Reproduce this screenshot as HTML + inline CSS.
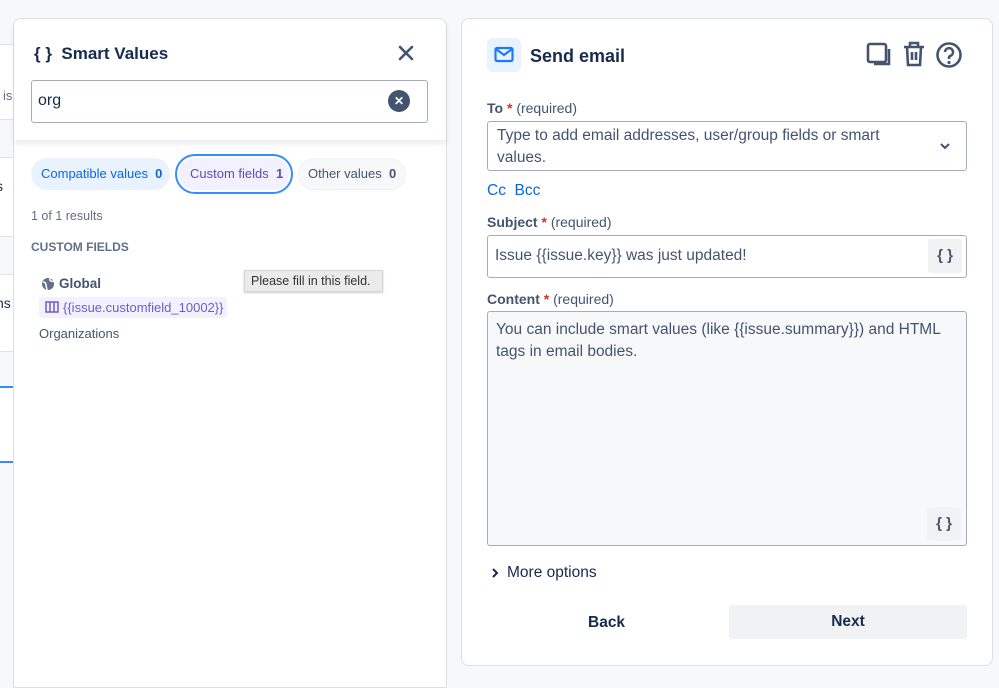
<!DOCTYPE html>
<html><head><meta charset="utf-8"><style>
*{box-sizing:border-box;margin:0;padding:0}
body{width:999px;height:675px;overflow:hidden;background:#f7f8f9;font-family:"Liberation Sans",sans-serif;color:#172b4d;position:relative}
.a{position:absolute}
.lbl{font-size:14px;font-weight:bold;color:#44546f}
.lbl span{font-weight:normal}
.lbl i{color:#c9372c;font-style:normal}
.box{border:1px solid #a5adba;border-radius:3px;background:#fff}
.sv{width:34px;height:34px;background:#f1f2f4;border-radius:3px;font-weight:bold;font-size:15px;text-align:center;line-height:34px;color:#44546f}
</style></head><body>
<div class="a" style="left:0;top:44px;width:13px;height:76px;background:#fff;border-top:1px solid #dfe1e6;border-bottom:1px solid #dfe1e6"></div>
<div class="a" style="left:0;top:157px;width:13px;height:80px;background:#fff;border-top:1px solid #dfe1e6;border-bottom:1px solid #dfe1e6"></div>
<div class="a" style="left:0;top:274px;width:13px;height:78px;background:#fff;border-top:1px solid #dfe1e6;border-bottom:1px solid #dfe1e6"></div>
<div class="a" style="left:0;top:386px;width:13px;height:77px;background:#fff;border-top:2px solid #388bff;border-bottom:2px solid #388bff"></div>
<div class="a" style="left:3px;top:88px;font-size:13px;color:#626f86">is</div>
<div class="a" style="left:-4px;top:178px;font-size:14px">s</div>
<div class="a" style="left:-4px;top:295px;font-size:14px">ns</div>
<div class="a" style="left:13px;top:18px;width:434px;height:670px;background:#fff;border:1px solid #dcdfe4;border-radius:8px 8px 0 0"></div>
<div class="a" style="left:14px;top:19px;width:432px;height:121px;background:#fff;border-radius:8px 8px 0 0;box-shadow:0 4px 6px rgba(9,30,66,.08)"></div>
<div class="a" style="left:34px;top:44px;font-size:17px;font-weight:bold;color:#172b4d">{ }&nbsp; Smart Values</div>
<svg class="a" style="left:398px;top:45px" width="16" height="16"><path d="M2 2L14 14M14 2L2 14" stroke="#44546f" stroke-width="2.6" stroke-linecap="round"/></svg>
<div class="a box" style="left:31px;top:80px;width:397px;height:43px"></div>
<div class="a" style="left:38px;top:92px;font-size:16px">org</div>
<div class="a" style="left:388px;top:90px;width:22px;height:22px;border-radius:50%;background:#44546f;color:#fff;font-size:12px;font-weight:bold;text-align:center;line-height:22px">✕</div>
<div class="a" style="left:31px;top:158px;width:139px;height:32px;border-radius:16px;background:#e9f2ff;color:#0c66e4;font-size:13px;line-height:32px;padding-left:10px">Compatible values&nbsp;&nbsp;<b>0</b></div>
<div class="a" style="left:175px;top:154px;width:118px;height:40px;border-radius:20px;border:2px solid #388bff;padding:2px"><div style="height:32px;border-radius:16px;background:#f3f0ff;color:#5e4db2;font-size:13px;line-height:32px;padding-left:11px">Custom fields&nbsp;&nbsp;<b>1</b></div></div>
<div class="a" style="left:298px;top:158px;width:108px;height:32px;border-radius:16px;background:#f7f8f9;border:1px solid #f1f2f4;color:#44546f;font-size:13px;line-height:30px;padding-left:9px">Other values&nbsp;&nbsp;<b>0</b></div>
<div class="a" style="left:31px;top:209px;font-size:12.5px;color:#626f86">1 of 1 results</div>
<div class="a" style="left:31px;top:240px;font-size:12px;font-weight:bold;color:#626f86">CUSTOM FIELDS</div>
<svg class="a" style="left:41px;top:277px" width="14" height="14" viewBox="0 0 14 14"><circle cx="7" cy="7" r="6" fill="#626f86"/><path d="M2 5c2 0 3 1 3 3s1 3 1 5M9 1.5c-1 2 1 3 3.5 3" fill="none" stroke="#fff" stroke-width="1.5"/></svg>
<div class="a" style="left:59px;top:276px;font-size:13.5px;font-weight:bold;color:#44546f">Global</div>
<div class="a" style="left:39px;top:297px;width:188px;height:21px;background:#f3f0ff;border-radius:3px;color:#6e5dc6;font-size:13px;line-height:21px;padding-left:24px">{{issue.customfield_10002}}</div>
<svg class="a" style="left:45px;top:301px" width="14" height="12"><rect x="1" y="1" width="12" height="10" fill="none" stroke="#6e5dc6" stroke-width="1.5"/><path d="M5 1v10M9 1v10" stroke="#6e5dc6" stroke-width="1.5"/></svg>
<div class="a" style="left:39px;top:326px;font-size:13px;color:#44546f">Organizations</div>
<div class="a" style="left:244px;top:270px;width:139px;height:22px;background:#ebebeb;border:1px solid #d6d6d6;box-shadow:0 1px 2px rgba(0,0,0,.2);font-size:12.5px;color:#333;line-height:20px;padding-left:6px">Please fill in this field.</div>
<div class="a" style="left:461px;top:18px;width:532px;height:648px;background:#fff;border:1px solid #dcdfe4;border-radius:8px"></div>
<div class="a" style="left:487px;top:38px;width:34px;height:34px;background:#e9f2ff;border-radius:6px"></div>
<svg class="a" style="left:494px;top:46px" width="20" height="18"><rect x="1.5" y="2" width="17" height="13" rx="1.5" fill="none" stroke="#1d7afc" stroke-width="2.2"/><path d="M2 3l8 6 8-6" fill="none" stroke="#1d7afc" stroke-width="2.2"/></svg>
<div class="a" style="left:530px;top:46px;font-size:18px;font-weight:bold">Send email</div>
<svg class="a" style="left:866px;top:42px" width="26" height="26"><rect x="2" y="2" width="18" height="18" rx="2" fill="none" stroke="#44546f" stroke-width="2.6"/><path d="M23 7v15H8" fill="none" stroke="#44546f" stroke-width="2.6"/></svg>
<svg class="a" style="left:902px;top:40px" width="24" height="28"><path d="M2 7h20M8 7V3h8v4M5 7l1 18h12l1-18M10 12v8M14 12v8" fill="none" stroke="#44546f" stroke-width="2.6"/></svg>
<svg class="a" style="left:935px;top:41px" width="28" height="28"><circle cx="14" cy="14" r="11.5" fill="none" stroke="#44546f" stroke-width="2.6"/><path d="M10 11a4 4 0 1 1 5 4c-1 .5-1 1-1 3" fill="none" stroke="#44546f" stroke-width="2.6"/><circle cx="14" cy="21.5" r="1.6" fill="#44546f"/></svg>
<div class="a lbl" style="left:487px;top:100px">To <i>*</i> <span>(required)</span></div>
<div class="a box" style="left:487px;top:121px;width:480px;height:50px"></div>
<div class="a" style="left:497px;top:125px;font-size:15.5px;color:#44546f;line-height:22px;width:430px">Type to add email addresses, user/group fields or smart values.</div>
<svg class="a" style="left:939px;top:142px" width="12" height="8"><path d="M2 2l4 4 4-4" fill="none" stroke="#44546f" stroke-width="2"/></svg>
<div class="a" style="left:487px;top:182px;font-size:15.5px;color:#0c66e4">Cc&nbsp;&nbsp;Bcc</div>
<div class="a lbl" style="left:487px;top:214px">Subject <i>*</i> <span>(required)</span></div>
<div class="a box" style="left:487px;top:235px;width:480px;height:43px"></div>
<div class="a" style="left:495px;top:247px;font-size:15.5px;color:#44546f">Issue {{issue.key}} was just updated!</div>
<div class="a sv" style="left:928px;top:239px">{ }</div>
<div class="a lbl" style="left:487px;top:291px">Content <i>*</i> <span>(required)</span></div>
<div class="a box" style="left:487px;top:311px;width:480px;height:235px;background:#f7f8f9"></div>
<div class="a" style="left:496px;top:319px;font-size:15.5px;color:#44546f;line-height:22px;width:460px">You can include smart values (like {{issue.summary}}) and HTML tags in email bodies.</div>
<div class="a sv" style="left:927px;top:507px">{ }</div>
<svg class="a" style="left:490px;top:568px" width="10" height="10"><path d="M3 1l4 4-4 4" fill="none" stroke="#172b4d" stroke-width="2"/></svg>
<div class="a" style="left:507px;top:564px;font-size:15.5px">More options</div>
<div class="a" style="left:588px;top:614px;font-size:15.5px;font-weight:bold">Back</div>
<div class="a" style="left:729px;top:605px;width:238px;height:34px;background:#f1f2f4;border-radius:3px;text-align:center;line-height:34px;font-size:15.5px;font-weight:bold">Next</div>
</body></html>
